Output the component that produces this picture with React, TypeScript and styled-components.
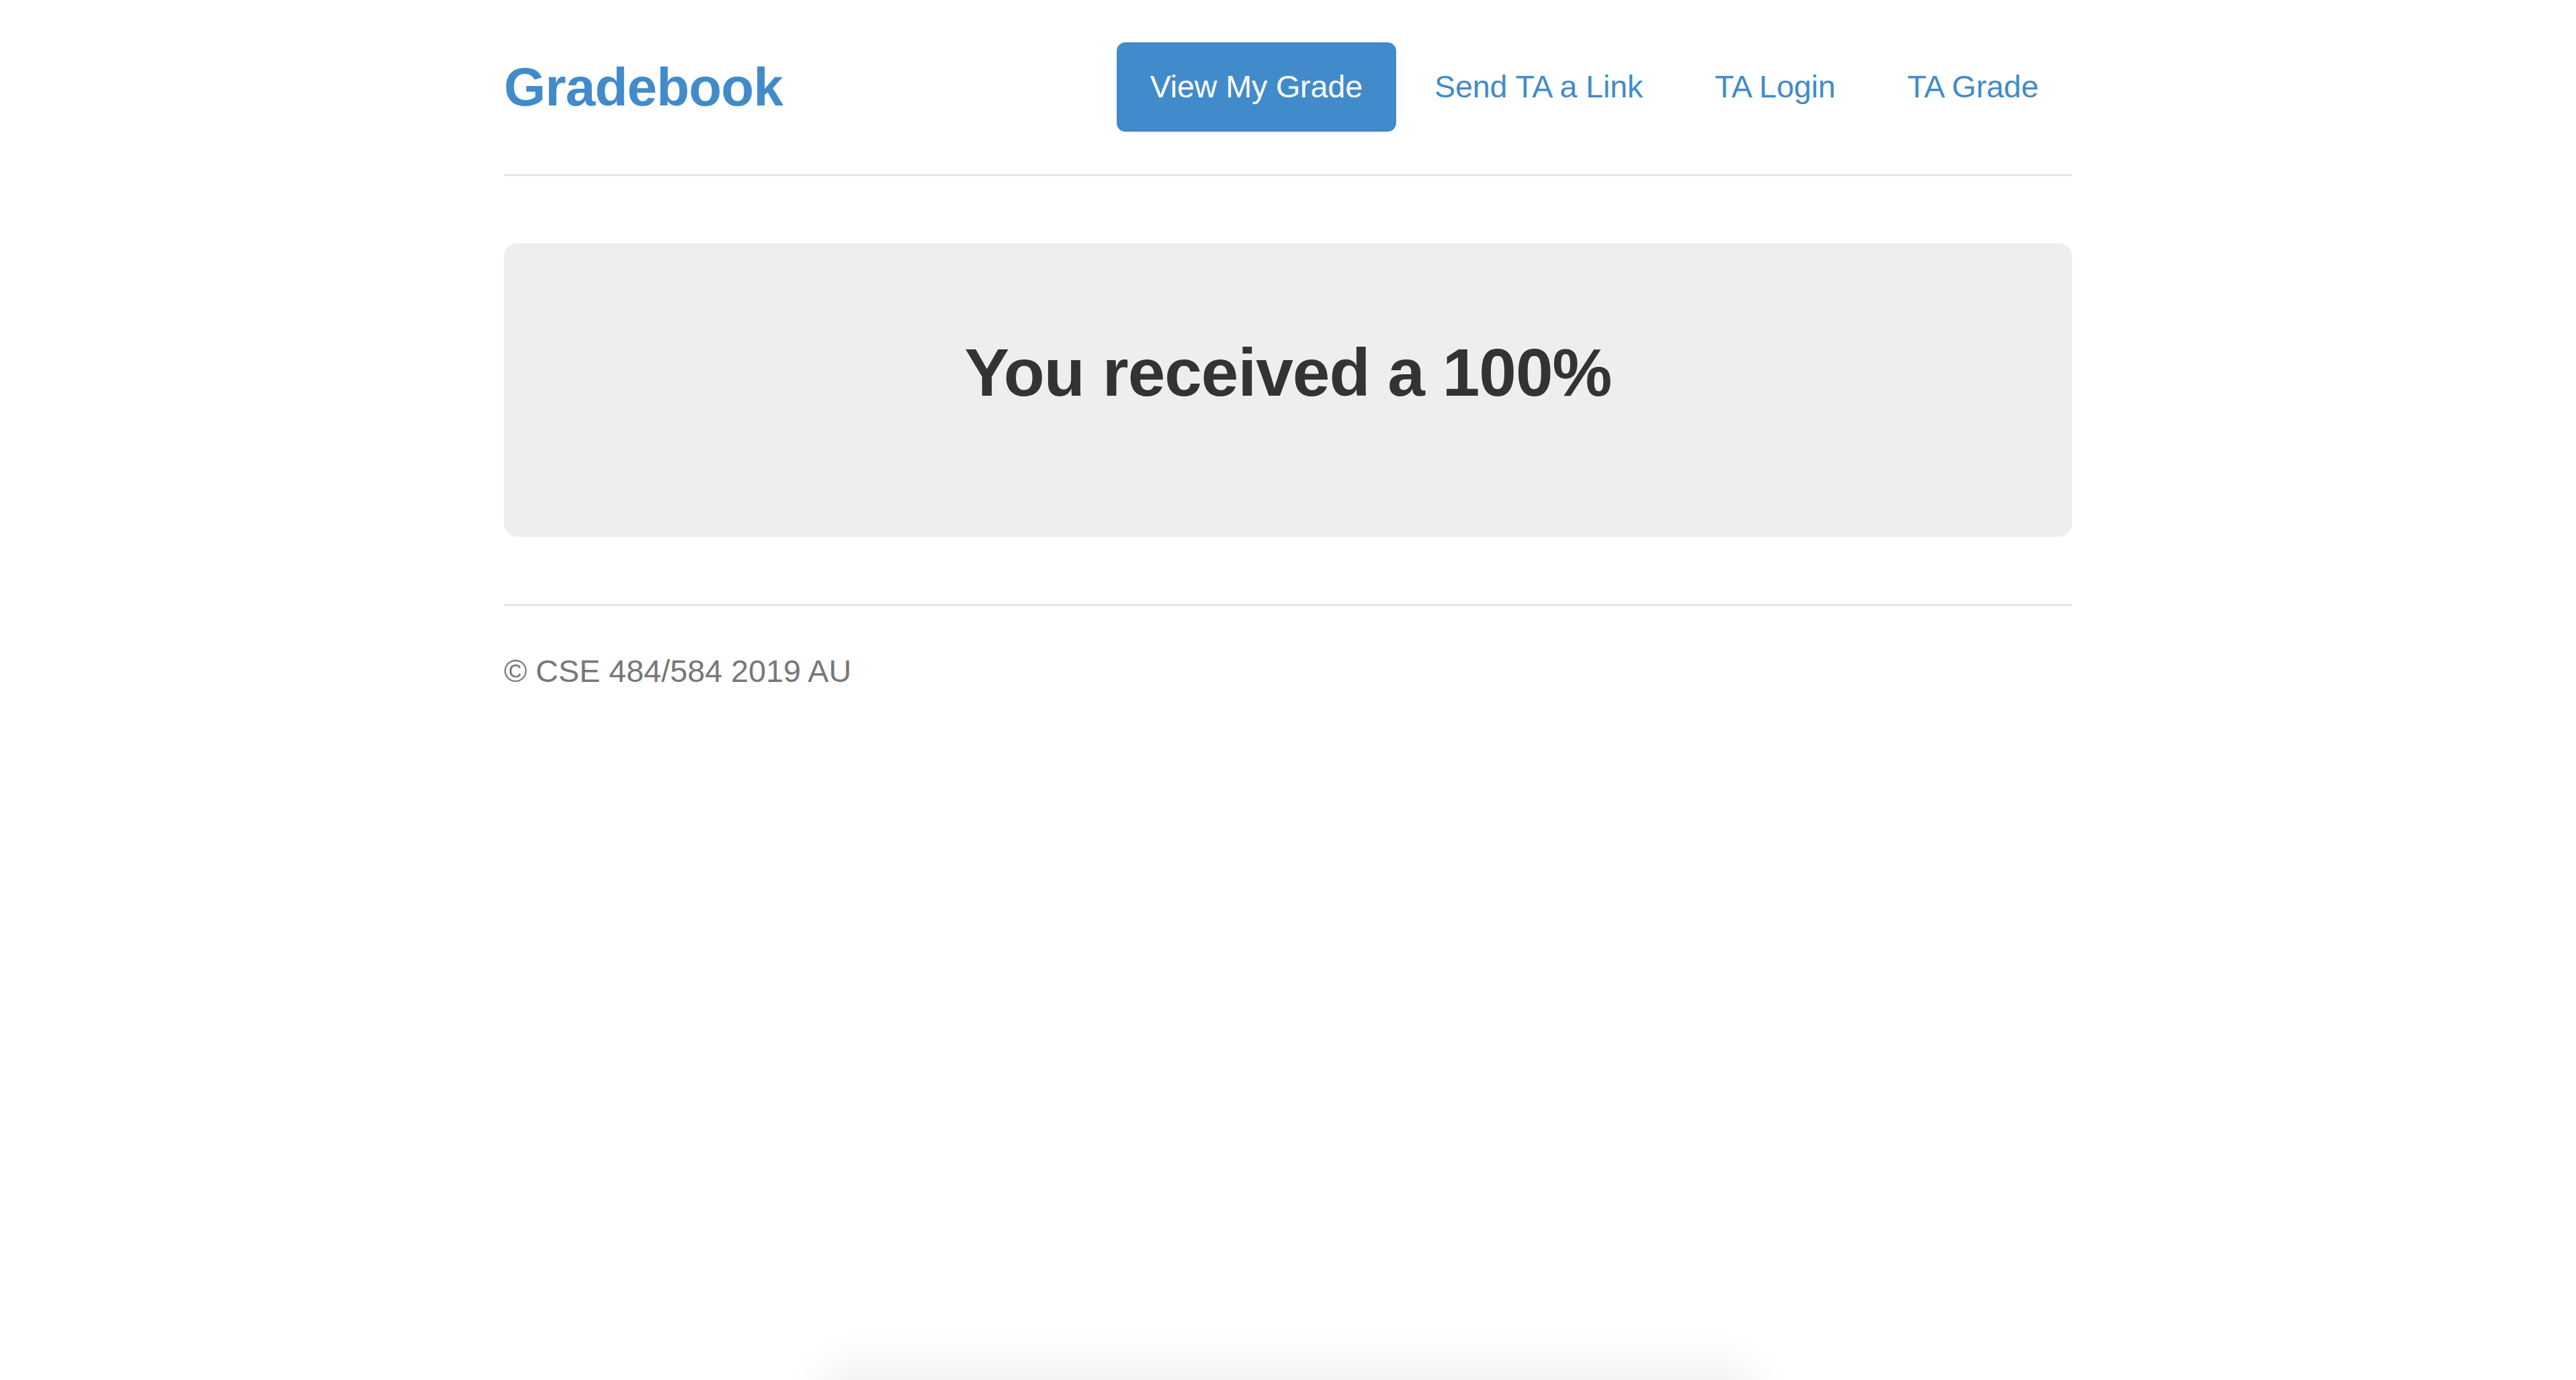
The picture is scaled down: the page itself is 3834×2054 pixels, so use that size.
import React from "react";
import styled, { createGlobalStyle } from "styled-components";

const GlobalStyle = createGlobalStyle`
  html, body {
    margin: 0;
    padding: 0;
    background: #fff;
  }
  body {
    font-family: "Liberation Sans", Helvetica, Arial, sans-serif;
    color: #333;
    padding-top: 63px;
  }
  * {
    box-sizing: border-box;
  }
`;

const Container = styled.div`
  max-width: 2334px;
  margin: 0 auto;
`;

const Header = styled.div`
  display: flex;
  justify-content: space-between;
  align-items: center;
  padding-bottom: 63px;
  border-bottom: 3px solid #e5e5e5;
`;

const Brand = styled.h3`
  margin: 0;
  font-size: 80px;
  line-height: 133px;
  font-weight: 700;
  letter-spacing: -0.8px;
  color: #428bca;
`;

const Nav = styled.ul`
  display: flex;
  gap: 7px;
  margin: 0;
  padding: 0;
  list-style: none;
`;

const Pill = styled.li<{ active?: boolean }>`
  padding: 33px 50px;
  font-size: 46.7px;
  line-height: 67px;
  letter-spacing: -0.15px;
  border-radius: 13px;
  color: ${(props) => (props.active ? "#fff" : "#428bca")};
  background-color: ${(props) => (props.active ? "#428bca" : "transparent")};
  cursor: pointer;
`;

const Jumbotron = styled.div`
  margin-top: 100px;
  padding: 137px 60px 190px;
  background-color: #eee;
  border-radius: 20px;
  text-align: center;
`;

const Grade = styled.h2`
  margin: 0;
  font-size: 100px;
  line-height: 110px;
  font-weight: 700;
  letter-spacing: -1px;
  color: #333;
`;

const Footer = styled.div`
  margin-top: 100px;
  padding-top: 64px;
  border-top: 3px solid #e5e5e5;
  font-size: 46.7px;
  line-height: 67px;
  color: #777;
`;

const BottomShade = styled.div`
  position: fixed;
  left: 50%;
  bottom: -70px;
  width: 1360px;
  height: 70px;
  transform: translateX(-50%);
  border-radius: 40px;
  box-shadow: 0 0 70px 20px rgba(0, 0, 0, 0.07);
  pointer-events: none;
`;

const links = ["View My Grade", "Send TA a Link", "TA Login", "TA Grade"];

const App: React.FC = () => {
  return (
    <>
      <GlobalStyle />
      <Container>
        <Header>
          <Brand>Gradebook</Brand>
          <Nav>
            {links.map((name, index) => (
              <Pill key={name} active={index === 0}>
                {name}
              </Pill>
            ))}
          </Nav>
        </Header>
        <Jumbotron>
          <Grade>You received a 100%</Grade>
        </Jumbotron>
        <Footer>© CSE 484/584 2019 AU</Footer>
      </Container>
      <BottomShade />
    </>
  );
};

export default App;
